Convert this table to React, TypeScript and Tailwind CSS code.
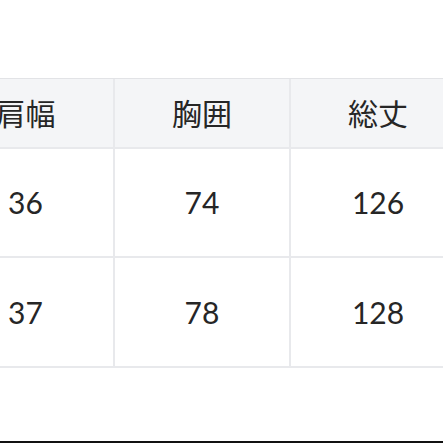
import React from "react";

const header = ["肩幅", "胸囲", "総丈"];
const rows = [
  ["36", "74", "126"],
  ["37", "78", "128"],
];

export default function App() {
  return (
    <div
      className="w-[443px] h-[443px] overflow-hidden bg-white flex flex-col text-[#262626]"
      style={{ fontFamily: "Lato, 'Noto Sans CJK JP', sans-serif" }}
    >
      <div className="mt-[78px] ml-[-62px] w-[700px] border-t border-[#e2e3e6]">
        <div className="grid grid-cols-[177px_176px_176px]">
          {header.map((h) => (
            <div
              key={h}
              className="h-[70px] bg-[#f4f5f7] border-r-2 border-b-2 border-[#e8e9ec] flex items-center justify-center text-[30px]"
            >
              {h}
            </div>
          ))}
          {rows.map((r, i) =>
            r.map((c, j) => (
              <div
                key={`${i}-${j}`}
                className={`${i === 0 ? "h-[109px]" : "h-[110px]"} bg-white border-r-2 border-b-2 border-[#e8e9ec] flex items-center justify-center text-[30px]`}
              >
                {c}
              </div>
            ))
          )}
        </div>
      </div>
      <div className="flex-1" />
      <div className="h-[2px] bg-[#111]" />
    </div>
  );
}
